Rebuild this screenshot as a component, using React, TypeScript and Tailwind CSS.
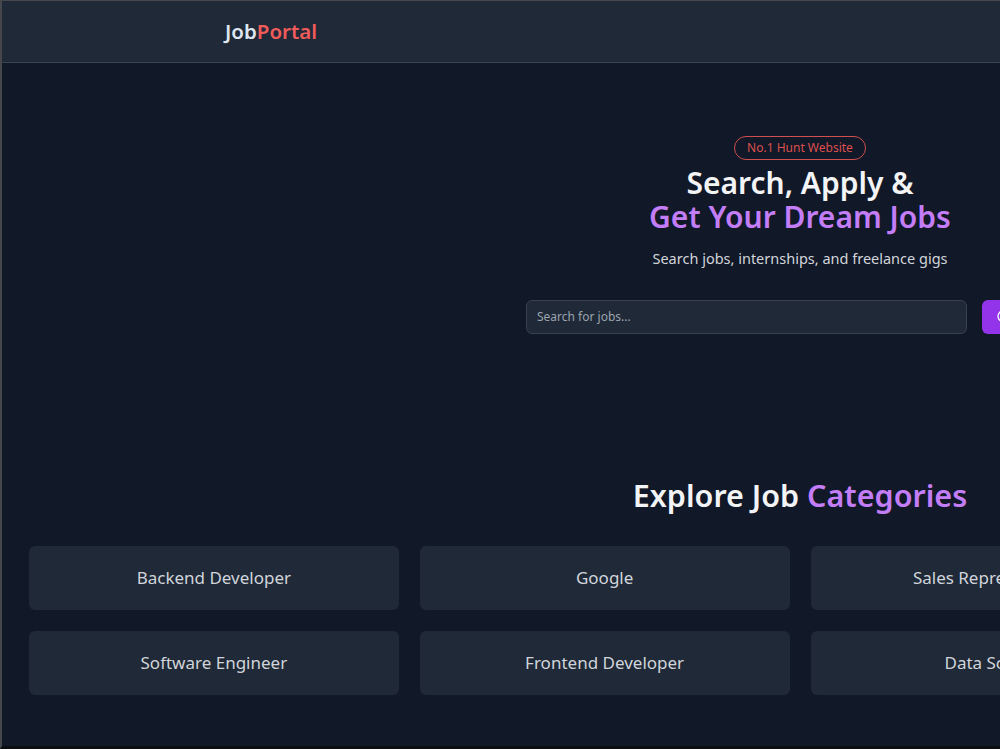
import { Search } from 'lucide-react'

const CATEGORIES = [
  'Backend Developer',
  'Google',
  'Sales Representative',
  'Graphic Designer',
  'Software Engineer',
  'Frontend Developer',
  'Data Science',
  'FullStack Developer',
]

function Navbar() {
  return (
    <header className="h-[62px] bg-[#1f2937] border-b border-[#3b4453]">
      <div className="max-w-7xl mx-auto pl-[65px] pr-16 h-full flex items-center justify-between">
        <h1 className="text-[20.5px] font-semibold text-[#dfe5ee]">
          Job<span className="text-[#f05b5b]">Portal</span>
        </h1>
        <nav className="flex items-center gap-6 text-sm text-gray-300">
          <span>Home</span>
          <span>Jobs</span>
          <span>Browse</span>
        </nav>
      </div>
    </header>
  )
}

function Hero() {
  return (
    <section className="flex flex-col items-center text-center pt-[73px]">
      <span className="px-[12px] h-[24px] flex items-center rounded-full border border-[#d24f4f] text-[#dc5050] text-[12px]">
        No.1 Hunt Website
      </span>
      <h2 className="mt-[6px] text-[30px] leading-[34px] font-semibold text-[#f3f4f6]">
        Search, Apply &amp;
        <span className="block text-[#c27df7]">Get Your Dream Jobs</span>
      </h2>
      <p className="mt-[14px] text-[14.5px] text-[#d1d5db]">Search jobs, internships, and freelance gigs</p>
      <div className="mt-[30px] flex items-center gap-[15px]">
        <input
          type="text"
          placeholder="Search for jobs..."
          className="w-[441px] h-[34px] px-[10px] rounded-md bg-[#1f2937] border border-[#374151] text-[12px] text-gray-200 placeholder:text-[#9ca3af] outline-none"
        />
        <button className="w-[92px] h-[34px] pl-[14px] rounded-md bg-[#9333ea] text-white text-sm flex items-center gap-2">
          <Search size={16} />
          Search
        </button>
      </div>
    </section>
  )
}

function Categories() {
  return (
    <section className="mt-[143px] px-[27px]">
      <h2 className="text-center text-[30.5px] leading-[36px] font-semibold text-[#f3f4f6]">
        Explore Job <span className="text-[#c27df7]">Categories</span>
      </h2>
      <div className="mt-[33px] grid grid-cols-4 gap-x-[21px] gap-y-[21px]">
        {CATEGORIES.map((c) => (
          <div
            key={c}
            className="h-[64px] rounded-md bg-[#1f2937] flex items-center justify-center text-[17px] text-[#d1d5db]"
          >
            {c}
          </div>
        ))}
      </div>
    </section>
  )
}

export default function App() {
  return (
    <div className="w-screen h-[749px] overflow-hidden bg-[#111827] border-l-2 border-t border-b-[3px] border-l-[#45474b] border-t-[#45474b] border-b-[#0c0f12] font-['Noto_Sans',sans-serif]">
      <div className="w-[1596px]">
        <Navbar />
        <Hero />
        <Categories />
      </div>
    </div>
  )
}
